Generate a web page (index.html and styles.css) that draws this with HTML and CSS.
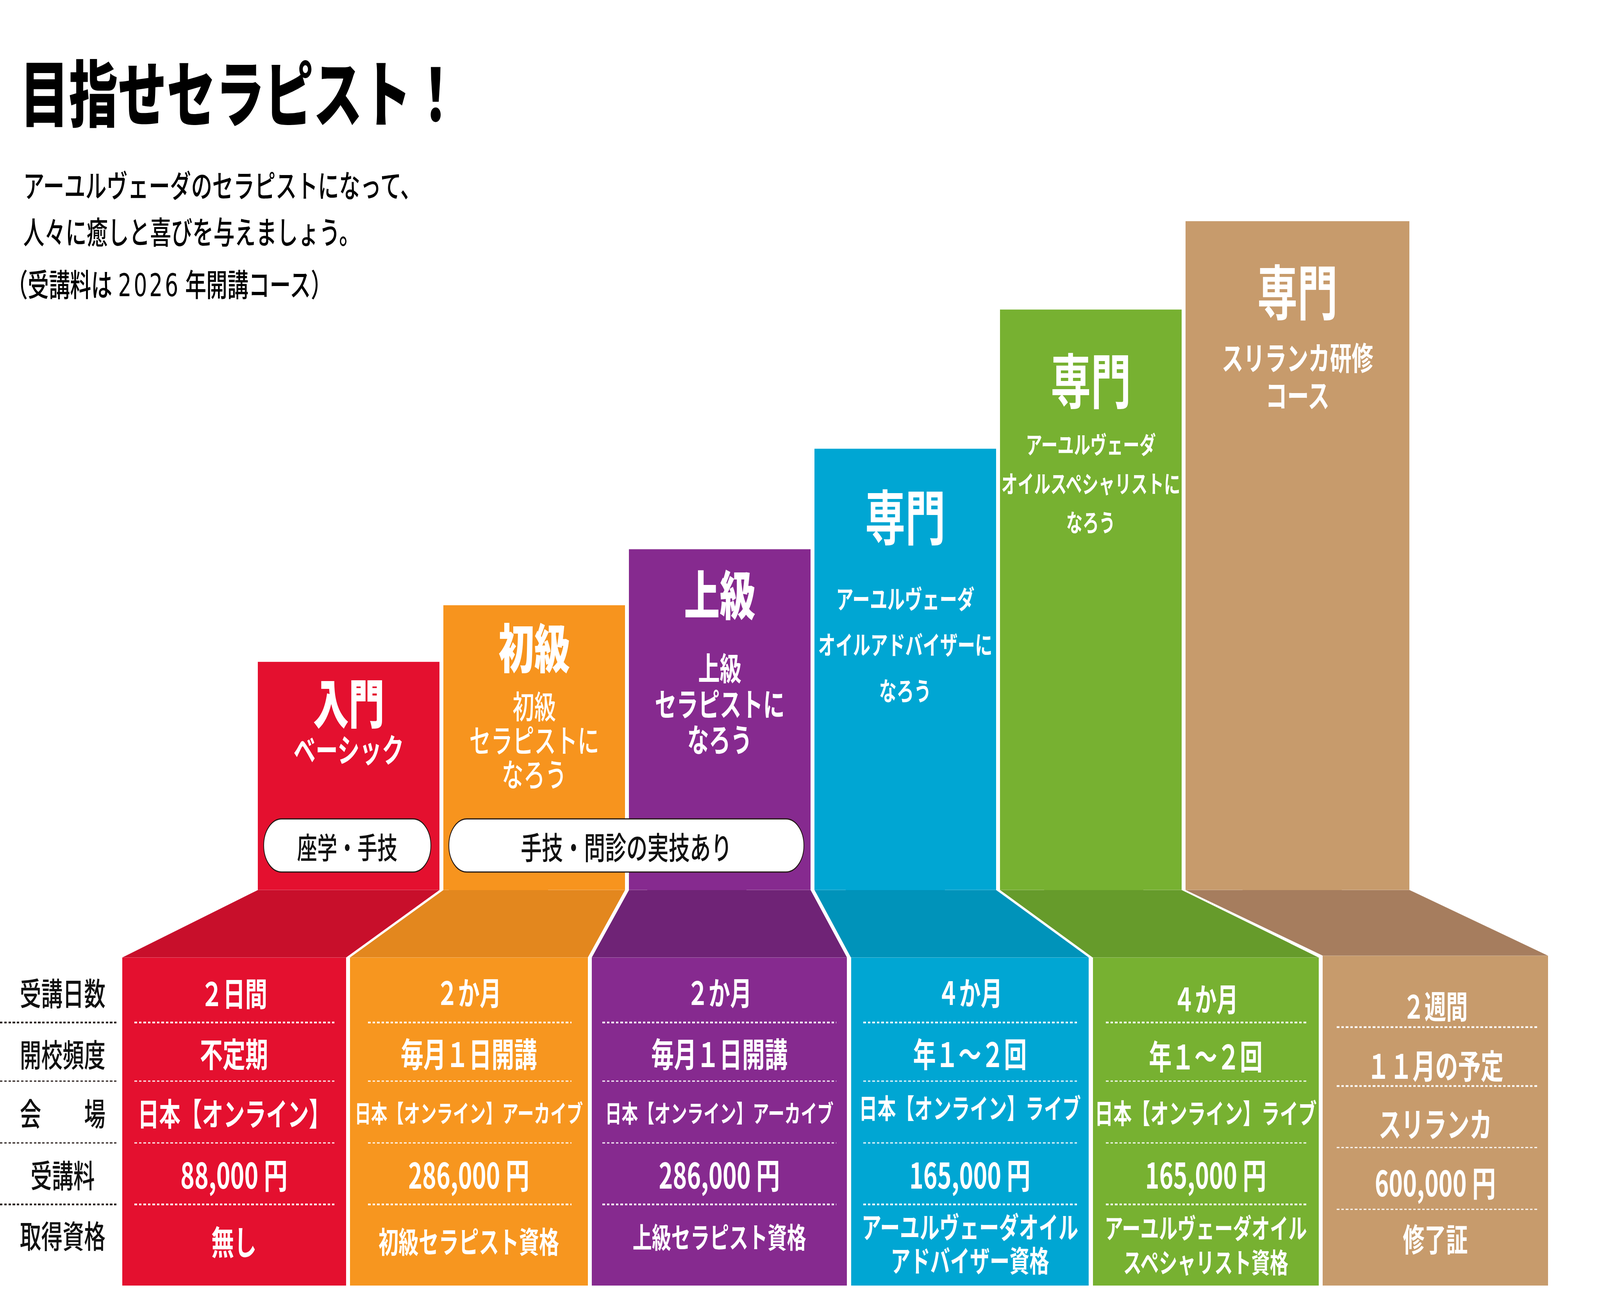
FILE: index.html
```html
<!DOCTYPE html>
<html lang="ja">
<head>
<meta charset="utf-8">
<title>目指せセラピスト！</title>
<link rel="stylesheet" href="styles.css">
</head>
<body>
<main class="page">
  <section class="top">
    <header class="intro">
      <h1 class="title">目指せセラピスト！</h1>
      <p class="lead">アーユルヴェーダのセラピストになって、<br>人々に癒しと喜びを与えましょう。</p>
      <p class="note">（受講料は <span class="num">2026</span> 年開講コース）</p>
    </header>
    <div class="uppers">
      <div class="up red">
        <div class="up-title heavy">入門</div>
        <div class="up-sub">ベーシック</div>
      </div>
      <div class="up orange">
        <div class="up-title heavy">初級</div>
        <div class="up-sub">初級<br>セラピストに<br>なろう</div>
      </div>
      <div class="up purple">
        <div class="up-title heavy">上級</div>
        <div class="up-sub">上級<br>セラピストに<br>なろう</div>
      </div>
      <div class="up blue">
        <div class="up-title pro">専門</div>
        <div class="up-sub">アーユルヴェーダ<br>オイルアドバイザーに<br>なろう</div>
      </div>
      <div class="up green">
        <div class="up-title pro">専門</div>
        <div class="up-sub">アーユルヴェーダ<br>オイルスペシャリストに<br>なろう</div>
      </div>
      <div class="up tan">
        <div class="up-title pro">専門</div>
        <div class="up-sub">スリランカ研修<br>コース</div>
      </div>
      <div class="pill pill-a">座学・手技</div>
      <div class="pill pill-b">手技・問診の実技あり</div>
    </div>
  </section>

  <svg class="bridge" viewBox="0 0 6054 173" width="6054" height="173" aria-hidden="true">
    <polygon class="d-red" points="976,0 1663,0 1309,173 462,173"/>
    <polygon class="d-orange" points="1678,0 2365,0 2224,173 1324,173"/>
    <polygon class="d-purple" points="2380,0 3067,0 3205,173 2239,173"/>
    <polygon class="d-blue" points="3082,0 3769,0 4120,173 3220,173"/>
    <polygon class="d-green" points="3784,0 4471,0 4990,173 4135,173"/>
    <polygon class="d-tan" points="4486,0 5333,0 5857,168 5005,168"/>
  </svg>

  <section class="table">
    <div class="labels">
      <div class="cell r1">受講日数</div>
      <div class="dots"></div>
      <div class="cell r2">開校頻度</div>
      <div class="dots"></div>
      <div class="cell r3">会　　場</div>
      <div class="dots"></div>
      <div class="cell r4">受講料</div>
      <div class="dots"></div>
      <div class="cell r5">取得資格</div>
    </div>

    <div class="col red">
      <div class="cell r1 f84">２日間</div>
      <div class="dots"></div>
      <div class="cell r2 f86">不定期</div>
      <div class="dots"></div>
      <div class="cell r3 f81">日本【オンライン】</div>
      <div class="dots"></div>
      <div class="cell r4 f90">88,000 円</div>
      <div class="dots"></div>
      <div class="cell r5 f86">無し</div>
    </div>

    <div class="col orange">
      <div class="cell r1 f82">２か月</div>
      <div class="dots"></div>
      <div class="cell r2 f86">毎月１日開講</div>
      <div class="dots"></div>
      <div class="cell r3 f62">日本【オンライン】アーカイブ</div>
      <div class="dots"></div>
      <div class="cell r4 f90">286,000 円</div>
      <div class="dots"></div>
      <div class="cell r5 f76">初級セラピスト資格</div>
    </div>

    <div class="col purple">
      <div class="cell r1 f82">２か月</div>
      <div class="dots"></div>
      <div class="cell r2 f86">毎月１日開講</div>
      <div class="dots"></div>
      <div class="cell r3 f62">日本【オンライン】アーカイブ</div>
      <div class="dots"></div>
      <div class="cell r4 f90">286,000 円</div>
      <div class="dots"></div>
      <div class="cell r5 f73">上級セラピスト資格</div>
    </div>

    <div class="col blue">
      <div class="cell r1 f82">４か月</div>
      <div class="dots"></div>
      <div class="cell r2 f86">年１～２回</div>
      <div class="dots"></div>
      <div class="cell r3 f70">日本【オンライン】ライブ</div>
      <div class="dots"></div>
      <div class="cell r4 f90">165,000 円</div>
      <div class="dots"></div>
      <div class="cell r5 f75 two">アーユルヴェーダオイル<br>アドバイザー資格</div>
    </div>

    <div class="col green">
      <div class="cell r1 f82">４か月</div>
      <div class="dots"></div>
      <div class="cell r2 f86">年１～２回</div>
      <div class="dots"></div>
      <div class="cell r3 f70">日本【オンライン】ライブ</div>
      <div class="dots"></div>
      <div class="cell r4 f90">165,000 円</div>
      <div class="dots"></div>
      <div class="cell r5 f70 two">アーユルヴェーダオイル<br>スペシャリスト資格</div>
    </div>

    <div class="col tan">
      <div class="cell r1 f82">２週間</div>
      <div class="dots"></div>
      <div class="cell r2 f86">１１月の予定</div>
      <div class="dots"></div>
      <div class="cell r3 f86">スリランカ</div>
      <div class="dots"></div>
      <div class="cell r4 f90">600,000 円</div>
      <div class="dots"></div>
      <div class="cell r5 f82">修了証</div>
    </div>
  </section>
</main>
<script src="fit.js"></script>
</body>
</html>
```

FILE: fit.js
```js
(function () {
  var root = document.documentElement;
  function fit() {
    var sx = root.clientWidth / 6054;
    var sy = root.clientHeight / 3304;
    root.style.setProperty('--sx', String(sx));
    root.style.setProperty('--k', String(sy / sx));
  }
  fit();
  window.addEventListener('resize', fit);
})();
```

FILE: styles.css
```css
* { box-sizing: border-box; }

html, body {
  margin: 0;
  padding: 0;
  width: 100%;
  height: 100%;
  background: #ffffff;
  overflow: hidden;
}

body {
  font-family: "Noto Sans CJK JP", "Noto Sans", sans-serif;
  color: #111111;
}

/* the page is drawn at its 6054 x 3304 design size, zoomed to the window
   width and stretched to the window height */
.page {
  width: 6054px;
  height: 3304px;
  zoom: var(--sx, 1);
  transform-origin: 0 0;
  transform: scaleY(var(--k, 1));
}

/* ---------- top area: intro + stair columns share one grid cell ---------- */
.top {
  display: grid;
  height: 2278px;
}

.intro,
.uppers {
  grid-area: 1 / 1;
}

.intro {
  align-self: start;
  padding-top: 138px;
  padding-left: 88px;
}

.title {
  margin: 0 0 0 -12px;
  font-size: 185px;
  line-height: 185px;
  font-weight: 900;
  color: #000000;
  white-space: nowrap;
}

.lead {
  margin: 90px 0 0 0;
  font-size: 80px;
  line-height: 118px;
  font-weight: 500;
  color: #000000;
  white-space: nowrap;
}

.note {
  margin: 16px 0 0 -63px;
  font-size: 80px;
  line-height: 118px;
  font-weight: 500;
  color: #000000;
  white-space: nowrap;
}

.note .num {
  font-family: "DejaVu Sans", "Noto Sans", sans-serif;
  font-weight: 400;
  letter-spacing: 8px;
  margin-left: 4px;
}

.uppers {
  align-self: end;
  position: relative;
  display: flex;
  align-items: flex-end;
  gap: 15px;
  padding-left: 976px;
}

.up {
  flex: none;
  width: 687px;
  display: flex;
  flex-direction: column;
  align-items: center;
  color: #ffffff;
  text-align: center;
  white-space: nowrap;
}

.up-title.heavy {
  font-size: 135px;
  line-height: 135px;
  font-weight: 900;
}

.up-title.pro {
  font-size: 152px;
  line-height: 152px;
  font-weight: 700;
}

.up-sub {
  font-weight: 700;
}

.up.red { height: 584px; padding-top: 33px; background: #e4102f; }
.up.red .up-sub { margin-top: 10px; font-size: 84px; line-height: 84px; }

.up.orange { height: 729px; padding-top: 35px; background: #f7941e; }
.up.orange .up-sub { margin-top: 42px; font-size: 82px; line-height: 87px; font-weight: 500; }

.up.purple { height: 873px; padding-top: 43px; background: #862a8f; }
.up.purple .up-sub { margin-top: 79px; font-size: 82px; line-height: 91px; }

.up.blue { height: 1130px; padding-top: 94px; background: #00a6d3; }
.up.blue .up-sub { margin-top: 77px; font-size: 66px; line-height: 117px; }

.up.green { height: 1486px; padding-top: 100px; background: #77b131; }
.up.green .up-sub { margin-top: 41px; font-size: 62px; line-height: 100px; }

.up.tan { width: 847px; height: 1712px; padding-top: 99px; background: #c79b6c; }
.up.tan .up-sub { margin-top: 48px; font-size: 82px; line-height: 96px; }

.pill {
  position: absolute;
  bottom: 44px;
  height: 139px;
  display: flex;
  align-items: center;
  justify-content: center;
  background: #ffffff;
  border: 4px solid #231815;
  border-radius: 70px;
  color: #111111;
  font-weight: 500;
  white-space: nowrap;
}

.pill-a { left: 996px; width: 636px; font-size: 76px; }
.pill-b { left: 1697px; width: 1346px; font-size: 80px; }

/* ---------- perspective bridge ---------- */
.bridge {
  display: block;
}

.d-red { fill: #c80f2b; }
.d-orange { fill: #e3871e; }
.d-purple { fill: #6f2376; }
.d-blue { fill: #0093ba; }
.d-green { fill: #669b2b; }
.d-tan { fill: #a67d5e; }

/* ---------- lower table ---------- */
.table {
  display: flex;
  gap: 15px;
  height: 839px;
}

.labels {
  flex: none;
  width: 447px;
  display: flex;
  flex-direction: column;
  color: #111111;
  font-size: 81px;
  font-weight: 500;
}

.labels .cell {
  padding-left: 75px;
  padding-right: 48px;
}

.labels .dots {
  background-image: repeating-linear-gradient(90deg, #231815 0 9px, transparent 9px 16px);
}

.col {
  flex: none;
  display: flex;
  flex-direction: column;
  color: #ffffff;
  font-weight: 700;
}

.col .dots {
  background-image: repeating-linear-gradient(90deg, #ffffff 0 10px, transparent 10px 17px);
}

.cell {
  display: flex;
  align-items: center;
  justify-content: center;
  white-space: nowrap;
  line-height: 1;
  text-align: center;
}

.cell.two { line-height: 86px; }

.dots {
  flex: none;
  height: 4px;
}

.r1 { height: 164px; padding-top: 10px; }
.r2 { height: 146px; padding-top: 6px; }
.r3 { height: 154px; }
.r4 { height: 154px; }
.r5 { height: 180px; }
.labels .r5 { height: 147px; }

.col.red { width: 847px; background: #e4102f; }
.col.red .dots { margin: 0 44px 0 47px; }

.col.orange { width: 900px; background: #f7961f; }
.col.orange .dots { margin: 0 61px 0 68px; }

.col.purple { width: 966px; background: #862a8f; }
.col.purple .dots { margin: 0 41px 0 40px; }
.col.purple .r5 { height: 154px; }

.col.blue { width: 900px; background: #00a6d3; }
.col.blue .dots { margin: 0 44px 0 46px; }
.col.blue .r3 { padding-bottom: 26px; }
.col.blue .r5 { height: 190px; }

.col.green { width: 855px; background: #77b131; }
.col.green .dots { margin: 0 43px 0 50px; }
.col.green .r1 { padding-top: 40px; }
.col.green .r2 { padding-top: 18px; }
.col.green .r5 { height: 200px; line-height: 87px; }

.col.tan { width: 852px; margin-top: -5px; padding-top: 17px; background: #c79b6c; }
.col.tan .dots { margin: 0 35px 0 53px; }
.col.tan .r1 { padding-top: 57px; }
.col.tan .r2 { padding-top: 39px; }
.col.tan .r3 { padding-top: 30px; }
.col.tan .r4 { padding-top: 17px; }
.col.tan .r5 { height: 142px; }

.f62 { font-size: 62px; }
.f70 { font-size: 70px; }
.f73 { font-size: 73px; }
.f75 { font-size: 75px; }
.f76 { font-size: 76px; }
.f81 { font-size: 81px; }
.f82 { font-size: 82px; }
.f84 { font-size: 84px; }
.f86 { font-size: 86px; }
.f90 { font-size: 90px; }
```
